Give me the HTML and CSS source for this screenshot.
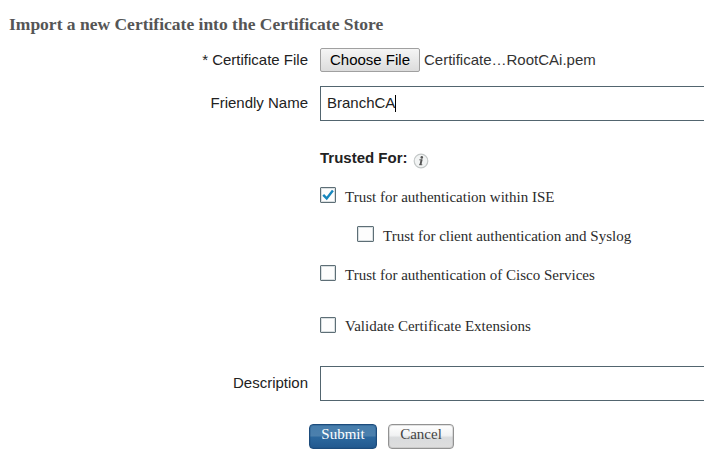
FILE: index.html
```html
<!DOCTYPE html>
<html lang="en">
<head>
<meta charset="utf-8">
<title>Import Certificate</title>
<link rel="stylesheet" href="styles.css">
</head>
<body>
<main class="page">
  <h1 class="title">Import a new Certificate into the Certificate Store</h1>
  <form class="form">
    <div class="row file-row">
      <span class="label">* Certificate File</span>
      <div class="file"><span class="choose">Choose File</span><span class="filename">Certificate…RootCAi.pem</span></div>
    </div>
    <div class="row name-row">
      <span class="label">Friendly Name</span>
      <div class="textbox"><span class="value">BranchCA</span><i class="caret"></i></div>
    </div>
    <div class="trusted">
      <div class="trusted-head">
        <span>Trusted For:</span>
        <svg class="info" viewBox="0 0 16 16"><circle cx="8" cy="8" r="6.8" fill="#f2f4f4" stroke="#c3c7c7" stroke-width="1.2"/><circle cx="8.8" cy="4.4" r="1.3" fill="#555"/><path d="M6.2 6.8H9.4M6 11.7H9.3" fill="none" stroke="#777" stroke-width="1"/><path d="M8.6 6.5L7.4 12" stroke="#555" stroke-width="1.9"/></svg>
      </div>
      <div class="check"><span class="box"><svg class="tick" viewBox="0 0 16 16"><path d="M3.2 7.8L6.7 11.4L12.9 3.6" fill="none" stroke="#1686bd" stroke-width="2.4"/></svg></span><span>Trust for authentication within ISE</span></div>
      <div class="check nested"><span class="box"></span><span>Trust for client authentication and Syslog</span></div>
      <div class="check"><span class="box"></span><span>Trust for authentication of Cisco Services</span></div>
      <div class="check validate"><span class="box"></span><span>Validate Certificate Extensions</span></div>
    </div>
    <div class="row desc-row">
      <span class="label">Description</span>
      <div class="textbox"></div>
    </div>
    <div class="actions"><span class="btn primary">Submit</span><span class="btn">Cancel</span></div>
  </form>
</main>
</body>
</html>
```
FILE: styles.css
```css
* { box-sizing: border-box; }
body {
  margin: 0;
  background: #fff;
  color: #222;
  font: 15px/17px "Liberation Sans", Arial, sans-serif;
  overflow: hidden;
}
.page { height: 458px; padding-top: 14px; }
.title {
  margin: 0 0 13px 9px;
  font: bold 17.5px/20px "Liberation Serif", "Times New Roman", serif;
  color: #555;
}
.row {
  display: grid;
  grid-template-columns: 308px 1fr;
  column-gap: 12px;
  align-items: center;
}
.label { padding-bottom: 2px; text-align: right; white-space: nowrap; }
.file-row { height: 26px; }
.file { display: flex; align-items: center; gap: 4px; }
.choose {
  width: 100px;
  height: 24px;
  border: 1px solid #a0a0a0;
  border-radius: 2px;
  background: linear-gradient(#f5f5f5, #dcdcdc);
  color: #000;
  line-height: 22px;
  text-align: center;
}
.filename { padding-bottom: 2px; color: #333; }
.name-row { margin-top: 13px; }
.textbox {
  display: flex;
  align-items: center;
  height: 35px;
  margin-right: -10px;
  padding-left: 6px;
  border: 1px solid #52656f;
}
.value { padding-bottom: 2px; }
.caret { width: 1px; height: 17px; background: #000; }
.trusted { padding: 27px 0 0 320px; }
.trusted-head {
  display: flex;
  height: 20px;
  gap: 6px;
  font-weight: bold;
  line-height: 20px;
}
.info { width: 16px; height: 16px; margin-top: 5px; margin-left: -0.5px; }
.check {
  display: flex;
  gap: 9px;
  height: 18px;
  margin-top: 21px;
  font: 15px/20px "Liberation Serif", "Times New Roman", serif;
  color: #2b2b2b;
}
.trusted-head + .check { margin-top: 19px; }
.nested { margin-left: 37px; }
.validate { margin-top: 34px; line-height: 18px; }
.box {
  width: 16px;
  height: 16px;
  border: 1px solid #5d6e76;
  border-radius: 1px;
  box-shadow: inset 0 0 0 1px #d9dfe1;
  background: #fdfdfd;
}
.nested .box { width: 17px; }
.tick { display: block; width: 16px; height: 16px; margin: -1px; }
.desc-row { margin-top: 31px; }
.actions { display: flex; gap: 11px; margin: 23px 0 0 309px; }
.btn {
  width: 66px;
  height: 25px;
  border: 1px solid #929292;
  border-radius: 4px;
  background: linear-gradient(#fff 0%, #f1f2f3 45%, #d9dbdd 55%, #dedede 100%);
  box-shadow: inset 0 0 0 1px rgba(160, 160, 160, .3);
  color: #444;
  font: 15px/18px "Liberation Serif", "Times New Roman", serif;
  text-align: center;
}
.primary {
  width: 68px;
  border-color: #1d4c7c;
  background: linear-gradient(#467dac 0%, #4c80ad 48%, #2c689e 52%, #22598f 100%);
  box-shadow: inset 0 0 0 1px rgba(30, 80, 130, .3);
  color: #fff;
}
```
